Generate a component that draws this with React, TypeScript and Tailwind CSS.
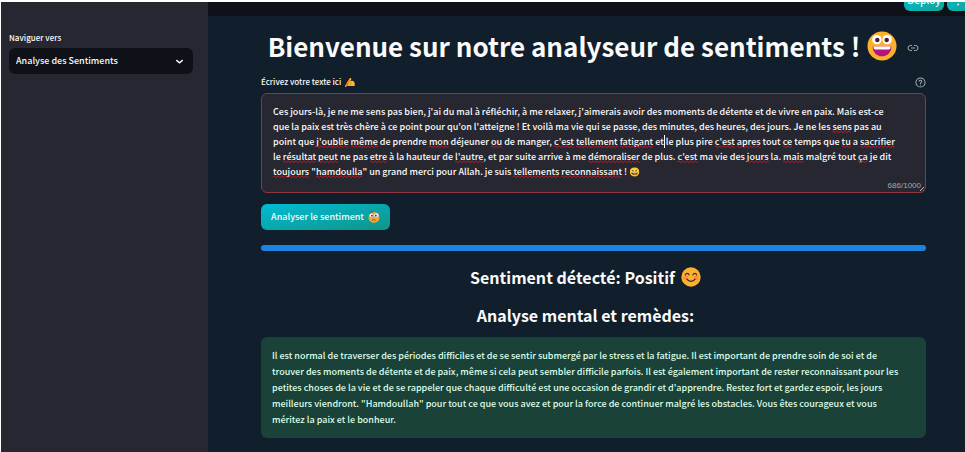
import React, { useId, useState } from "react";

const APP_FONT = "font-['Noto_Sans_CJK_SC','Noto_Sans_CJK_JP',sans-serif]";

const INITIAL_TEXT =
  "Ces jours-là, je ne me sens pas bien, j'ai du mal à réfléchir, à me relaxer, j'aimerais avoir des moments de détente et de vivre en paix. Mais est-ce que la paix est très chère à ce point pour qu'on l'atteigne ! Et voilà ma vie qui se passe, des minutes, des heures, des jours. Je ne les sens pas au point que j'oublie même de prendre mon déjeuner ou de manger, c'est tellement fatigant et le plus pire c'est apres tout ce temps que tu a sacrifier le résultat peut ne pas etre à la hauteur de l'autre, et par suite arrive à me démoraliser de plus. c'est ma vie des jours la. mais malgré tout ça je dit toujours \"hamdoulla\" un grand merci pour Allah. je suis tellements reconnaissant ! 😀";

type Mark = { find: string; length: number; kind: "wrong" | "caret" };

const wrong = (find: string, length = find.length): Mark => ({ find, length, kind: "wrong" });

// Spell checker marks and the caret, in reading order.
const MARKS: Mark[] = [
  wrong("sens pas au", 4),
  wrong("j'oublie"),
  wrong("même"),
  wrong("mon"),
  wrong("ou ", 2),
  wrong("c'est"),
  wrong("tellement"),
  wrong("fatigant"),
  { find: " le plus", length: 0, kind: "caret" },
  wrong("c'est"),
  wrong("apres"),
  wrong("ce"),
  wrong("tu"),
  wrong("sacrifier"),
  wrong("résultat"),
  wrong("peut"),
  wrong("etre"),
  wrong("l'autre"),
  wrong("démoraliser"),
  wrong("c'est"),
  wrong("jours"),
  wrong("mais"),
  wrong("ça"),
  wrong("toujours"),
  wrong("hamdoulla"),
  wrong("tellements"),
  wrong("reconnaissant"),
];

type Piece = { text: string; kind: "plain" | "wrong" | "caret" };

function annotate(text: string): Piece[] {
  const pieces: Piece[] = [];
  let position = 0;
  for (const mark of MARKS) {
    const start = text.indexOf(mark.find, position);
    if (start < 0) continue;
    pieces.push({ text: text.slice(position, start), kind: "plain" });
    pieces.push({ text: text.slice(start, start + mark.length), kind: mark.kind });
    position = start + mark.length;
  }
  pieces.push({ text: text.slice(position), kind: "plain" });
  return pieces;
}

function GrinningFace({ className }: { className: string }) {
  return (
    <svg viewBox="0 0 32 32" className={className} role="img" aria-label="Visage souriant">
      <circle cx="16" cy="16" r="15.5" fill="#fdb02c" />
      <circle cx="10.5" cy="9.2" r="5" fill="#fff" />
      <circle cx="21.5" cy="9.2" r="5" fill="#fff" />
      <circle cx="11" cy="9.5" r="2.4" fill="#40242f" />
      <circle cx="21" cy="9.5" r="2.4" fill="#40242f" />
      <path d="M6 16.5h20c0 6-4.2 10.500-10 10.500S6 22.500 6 16.500z" fill="#b4147c" />
      <path d="M7 16.500h18v1.300c0 1-.8 1.800-1.800 1.800H8.800c-1 0-1.800-.8-1.800-1.800z" fill="#fff" />
    </svg>
  );
}

function BlushingFace({ className }: { className: string }) {
  return (
    <svg viewBox="0 0 32 32" className={className} role="img" aria-label="Visage heureux">
      <circle cx="16" cy="16" r="15.5" fill="#fcb130" />
      <circle cx="7.5" cy="17" r="4" fill="#fb8f3c" />
      <circle cx="24.5" cy="17" r="4" fill="#fb8f3c" />
      <g fill="none" stroke="#4a2a33" strokeWidth="2" strokeLinecap="round">
        <path d="M7 12.500c.8-3 5-3 5.800 0" />
        <path d="M19.200 12.500c.8-3 5-3 5.800 0" />
        <path d="M9.500 19.500c2.800 4.500 10.200 4.500 13 0" />
      </g>
    </svg>
  );
}

function MonocleFace({ className }: { className: string }) {
  return (
    <svg viewBox="0 0 32 32" className={className} role="img" aria-label="Visage au monocle">
      <circle cx="16" cy="17" r="14.5" fill="#f9a32b" />
      <circle cx="9.5" cy="12" r="4.8" fill="#fff" />
      <circle cx="22" cy="12" r="6.5" fill="#f3f6f8" stroke="#a9a7a6" strokeWidth="2" />
      <circle cx="10.5" cy="12.5" r="2.4" fill="#40242f" />
      <circle cx="21" cy="12.5" r="2.4" fill="#40242f" />
      <path d="M4 5c2-3 6-4 9-2" stroke="#6d4534" strokeWidth="2" fill="none" />
      <path d="M11 25c2-3 7-3 9 0" stroke="#6d4534" strokeWidth="2.2" fill="none" strokeLinecap="round" />
    </svg>
  );
}

function WritingHand({ className }: { className: string }) {
  return (
    <svg viewBox="0 0 32 32" className={className} role="img" aria-label="Main qui écrit">
      <path d="M5 19 15 5c2-3 6-1 5 2l-3 6 6-1c4 0 8 4 8 9v8H13c-5 0-7-2-6-4l1-3z" fill="#fdb92f" />
      <path d="M14 18h8M12 22h9M13 26h7" stroke="#d98518" strokeWidth="1.5" />
      <path d="M2 25 12 9l4 3L7 27l-5 4z" fill="#ef7d1a" />
      <path d="M0 32l1-6 5 3z" fill="#f6e6c8" />
    </svg>
  );
}

function LinkIcon() {
  return (
    <svg viewBox="0 0 24 24" className="size-3" fill="none" stroke="currentColor" strokeWidth="2">
      <path d="M10 17H7A5 5 0 0 1 7 7h3M14 7h3a5 5 0 0 1 0 10h-3M8 12h8" />
    </svg>
  );
}

function HelpIcon() {
  return (
    <svg
      viewBox="0 0 24 24"
      className="size-[11px]"
      fill="none"
      stroke="currentColor"
      strokeWidth="2.2"
      strokeLinecap="round"
    >
      <circle cx="12" cy="12" r="10" />
      <path d="M9.100 9a3 3 0 0 1 5.800 1c0 2-3 2.600-3 4M12 17.500h.01" />
    </svg>
  );
}

function Squiggle({ pattern }: { pattern: string }) {
  return (
    <svg className="visible absolute bottom-0 left-0 h-[3px] w-full">
      <rect width="100%" height="3" fill={`url(#${pattern})`} />
    </svg>
  );
}

function Sidebar() {
  const id = useId();
  return (
    <aside className="w-[207px] shrink-0 bg-[#262730] pt-7 pr-[15px] pl-2">
      <label htmlFor={id} className="block text-[8px] leading-4 font-medium">
        Naviguer vers
      </label>
      <div className="relative mt-0.5">
        <select
          id={id}
          className="block h-[26px] w-full appearance-none rounded-md bg-[#0e1117] px-[7px] text-[9px] font-medium outline-none"
        >
          <option>Analyse des Sentiments</option>
        </select>
        <svg
          viewBox="0 0 24 24"
          className="pointer-events-none absolute top-2 right-2 size-[11px]"
          fill="none"
          stroke="currentColor"
          strokeWidth="3"
          aria-hidden="true"
        >
          <path d="m5 9 7 6 7-6" />
        </svg>
      </div>
    </aside>
  );
}

function TextEditor() {
  const id = useId();
  const [text, setText] = useState(INITIAL_TEXT);
  const metrics = "col-start-1 row-start-1 pr-7 pl-[11px] pt-[10px] pb-[13px] text-[9px] leading-[15px] font-medium";
  return (
    <section>
      <div className="flex h-4 items-center justify-between">
        <label htmlFor={id} className="flex items-center gap-1 text-[8px] leading-4 font-medium">
          Écrivez votre texte ici
          <WritingHand className="size-[10px]" />
        </label>
        <button type="button" aria-label="Aide" className="text-[#a3a8b0]">
          <HelpIcon />
        </button>
      </div>
      <div className="relative mt-[3px] grid overflow-hidden rounded-md border border-[#8f353f] bg-[#262730]">
        <svg className="absolute size-0" aria-hidden="true">
          <pattern id="squiggle" width="4" height="3" patternUnits="userSpaceOnUse">
            <path d="M-1 3 1 .8l2 2 2-2" fill="none" stroke="#c01822" strokeWidth="1" />
          </pattern>
        </svg>
        <div aria-hidden="true" className={`${metrics} invisible whitespace-pre-wrap`}>
          {annotate(text).map((piece, index) => (
            <span key={index} className="relative">
              {piece.text}
              {piece.kind === "wrong" && <Squiggle pattern="squiggle" />}
              {piece.kind === "caret" && <span className="visible absolute bottom-0 left-0 h-[13px] w-px bg-white" />}
            </span>
          ))}
        </div>
        <textarea
          id={id}
          value={text}
          onChange={(event) => setText(event.target.value)}
          spellCheck={false}
          maxLength={1000}
          className={`${metrics} resize-none overflow-hidden bg-transparent outline-none`}
        />
        <span className="absolute right-1 bottom-0 font-['Liberation_Sans',sans-serif] text-[8px] leading-3 text-[#a3a8b0]">
          {Array.from(text).length}/1000
        </span>
        <svg viewBox="0 0 6 6" className="absolute right-0 bottom-0 size-[6px]" stroke="#c4c6cb" aria-hidden="true">
          <path d="M1 5 5 1M4 5l1-1" />
        </svg>
      </div>
    </section>
  );
}

export default function App() {
  return (
    <div className={`flex min-h-screen border-t-2 border-l border-white bg-[#101f2b] text-[#fafafa] ${APP_FONT}`}>
      <Sidebar />
      <div className="flex min-w-0 flex-1 flex-col">
        <header className="flex h-[14px] items-end justify-end gap-[3px] overflow-hidden bg-[#0e1117] pb-[5px]">
          <button
            type="button"
            className="h-[22px] w-10 shrink-0 rounded-md bg-linear-to-br from-[#00bcd4] to-[#12a598] text-[10px] leading-4 font-medium"
          >
            Deploy
          </button>
          <button
            type="button"
            aria-label="Menu"
            className="-mr-1 h-[22px] w-[22px] shrink-0 rounded-md bg-linear-to-br from-[#00bcd4] to-[#12a598] text-[10px] leading-4 font-bold"
          >
            ⋮
          </button>
        </header>
        <main className="flex flex-col pr-[39px] pl-[53px]">
          <h1 className="mt-2.5 flex h-10 items-center justify-center gap-[7px] text-[26px] leading-10 font-bold whitespace-nowrap">
            Bienvenue sur notre analyseur de sentiments !
            <GrinningFace className="size-[30px] shrink-0" />
            <a href="#bienvenue" aria-label="Lien vers cette section" className="ml-[3px] pt-1 text-[#a3a8b0]">
              <LinkIcon />
            </a>
          </h1>
          <div className="mt-2">
            <TextEditor />
          </div>
          <button
            type="button"
            className="mt-[11px] flex h-[26px] w-[129px] items-center justify-center gap-1 self-start rounded-md bg-linear-to-br from-[#00bcd4] to-[#0f9488] text-[9px] font-medium"
          >
            Analyser le sentiment
            <MonocleFace className="size-3" />
          </button>
          <progress
            value={100}
            max={100}
            aria-label="Progression de l'analyse"
            className="mt-[15px] block h-[6px] w-full appearance-none overflow-hidden rounded-full [&::-webkit-progress-bar]:bg-[#262730] [&::-webkit-progress-value]:bg-[#1c83e1]"
          />
          <h2 className="mt-3.5 flex items-center justify-center gap-1.5 pr-4 text-[16px] leading-6 font-bold">
            Sentiment détecté: Positif
            <BlushingFace className="size-5" />
          </h2>
          <h2 className="mt-3.5 pr-4 text-center text-[16px] leading-6 font-bold">Analyse mental et remèdes:</h2>
          <p className="mt-2.5 rounded-md bg-[#1a4238] pt-[11px] pr-5 pb-[10px] pl-[11px] text-[9px] leading-4 font-medium text-[#dffde9]">
            Il est normal de traverser des périodes difficiles et de se sentir submergé par le stress et la fatigue. Il est
            important de prendre soin de soi et de trouver des moments de détente et de paix, même si cela peut sembler
            difficile parfois. Il est également important de rester reconnaissant pour les petites choses de la vie et de se
            rappeler que chaque difficulté est une occasion de grandir et d'apprendre. Restez fort et gardez espoir, les
            jours meilleurs viendront. "Hamdoullah" pour tout ce que vous avez et pour la force de continuer malgré les
            obstacles. Vous êtes courageux et vous méritez la paix et le bonheur.
          </p>
        </main>
      </div>
    </div>
  );
}
